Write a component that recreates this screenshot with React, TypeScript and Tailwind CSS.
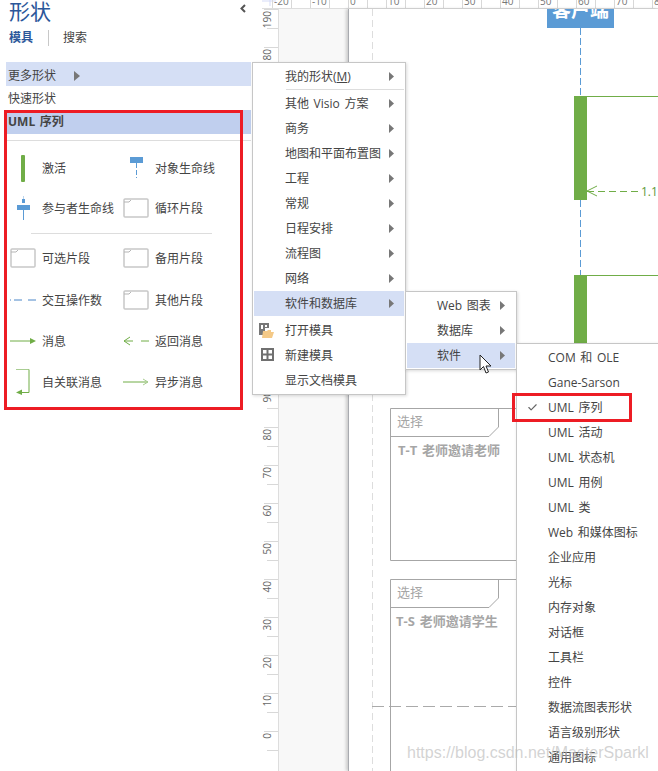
import React from "react";
import { Check } from "lucide-react";

const GREEN = "#70ad47";
const BLUE = "#5b9bd5";

function Caret({ className = "" }: { className?: string }) {
  return (
    <svg width="5" height="9" viewBox="0 0 5 9" className={className}>
      <polygon points="0,0 5,4.5 0,9" fill="#777" />
    </svg>
  );
}

function Fragment() {
  return (
    <svg width="26" height="20" viewBox="0 0 26 20">
      <rect x="1" y="1" width="24" height="18" rx="1" fill="#fff" stroke="#c8c8c8" strokeWidth="1.5" />
      <path d="M1 4 H6 L8 2" fill="none" stroke="#b5b5b5" />
    </svg>
  );
}

function Stencil({ label, icon }: { label: string; icon: React.ReactNode }) {
  return (
    <div className="flex w-[113px] items-center">
      <div className="flex w-[26px] shrink-0 items-center justify-center">{icon}</div>
      <span className="ml-[6px] whitespace-nowrap pt-[2px]">{label}</span>
    </div>
  );
}

function StencilRow({ h, children }: { h: string; children: React.ReactNode }) {
  return <div className={`flex items-center pl-[10px] ${h}`}>{children}</div>;
}

function Sidebar() {
  return (
    <aside className="h-full w-[262px] shrink-0 bg-white text-xs text-[#444]">
      <div className="flex h-[22px] items-center justify-between pl-[9px] pr-[16px]">
        <span className="text-[21px] leading-none text-[#2b579a]">形状</span>
        <svg width="6" height="9" viewBox="0 0 6 9" className="-mt-[6px]">
          <path d="M5 1 L1.5 4.5 L5 8" fill="none" stroke="#555" strokeWidth="2" />
        </svg>
      </div>
      <div className="mt-[8px] flex h-[16px] items-center pl-[9px]">
        <span className="font-bold text-[#2b579a]">模具</span>
        <span className="ml-[15px] mr-[14px] h-[16px] w-px bg-[#c8c8c8]" />
        <span>搜索</span>
      </div>
      <div className="mt-[16px] ml-[6px] w-[245px]">
        <div className="flex h-[24px] items-center bg-[#d5dff5] pl-[2px] pt-[3px]">
          更多形状
          <svg width="6" height="10" viewBox="0 0 6 10" className="ml-[18px]">
            <polygon points="0,0 6,5 0,10" fill="#777" />
          </svg>
        </div>
        <div className="flex h-[24px] items-center pl-[2px] pt-[2px]">快速形状</div>
        <div className="flex h-[24px] items-center bg-[#c0cfee] pl-[2px] font-bold">UML 序列</div>
        <div className="mt-[6px] h-px bg-[#dddddd]" />
      </div>
      <div className="mt-[7px]">
        <StencilRow h="h-[40px]">
          <Stencil label="激活" icon={<div className="h-[27px] w-[4px] rounded-[1px] bg-[#70ad47]" />} />
          <Stencil
            label="对象生命线"
            icon={
              <svg width="14" height="22" viewBox="0 0 14 22" className="ml-[2px]">
                <rect x="0" y="0" width="13" height="6" fill={BLUE} />
                <path d="M6.5 6 V21" stroke={BLUE} strokeDasharray="5 2" />
              </svg>
            }
          />
        </StencilRow>
        <StencilRow h="h-[40px]">
          <Stencil
            label="参与者生命线"
            icon={
              <svg width="14" height="24" viewBox="0 0 14 24" className="ml-[2px]">
                <path d="M6.5 0 V3" stroke="#bcd4ec" />
                <rect x="5" y="3" width="3" height="4" fill={BLUE} />
                <rect x="0" y="9" width="13" height="5" fill={BLUE} />
                <path d="M6.5 14 V24" stroke={BLUE} />
              </svg>
            }
          />
          <Stencil label="循环片段" icon={<Fragment />} />
        </StencilRow>
        <div className="ml-[31px] flex h-[10px] w-[181px] items-center">
          <div className="h-px w-full bg-[#dddddd]" />
        </div>
        <StencilRow h="h-[40px]">
          <Stencil label="可选片段" icon={<Fragment />} />
          <Stencil label="备用片段" icon={<Fragment />} />
        </StencilRow>
        <StencilRow h="h-[44px]">
          <Stencil
            label="交互操作数"
            icon={
              <svg width="26" height="4" viewBox="0 0 26 4">
                <path d="M0 2 H1 M4 2 H12 M18 2 H26" stroke="#4a86c8" />
              </svg>
            }
          />
          <Stencil label="其他片段" icon={<Fragment />} />
        </StencilRow>
        <StencilRow h="h-[38px]">
          <Stencil
            label="消息"
            icon={
              <svg width="26" height="8" viewBox="0 0 26 8">
                <path d="M0 4 H21" stroke={GREEN} />
                <polygon points="20,1 26,4 20,7" fill={GREEN} />
              </svg>
            }
          />
          <Stencil
            label="返回消息"
            icon={
              <svg width="26" height="10" viewBox="0 0 26 10">
                <path d="M7 1 L1 5 L7 9" fill="none" stroke={GREEN} />
                <path d="M1 5 H10 M18 5 H26" stroke={GREEN} />
              </svg>
            }
          />
        </StencilRow>
        <StencilRow h="h-[44px]">
          <Stencil
            label="自关联消息"
            icon={
              <svg width="26" height="26" viewBox="0 0 26 26">
                <path d="M6 0.5 H19" stroke="#a9cd92" />
                <path d="M19 0.5 V23.5 H10" fill="none" stroke={GREEN} />
                <polygon points="12,20.5 6,23.5 12,26" fill={GREEN} />
              </svg>
            }
          />
          <Stencil
            label="异步消息"
            icon={
              <svg width="26" height="8" viewBox="0 0 26 8">
                <path d="M0 4 H25" stroke={GREEN} />
                <path d="M20 1 L25 4 L20 7" fill="none" stroke="#a9cd92" />
              </svg>
            }
          />
        </StencilRow>
      </div>
    </aside>
  );
}

function TopRuler() {
  const ticks = Array.from({ length: 21 }, (_, i) => 272 + i * 19);
  const labels = ["-20", "-10", "0", "10", "20", "30", "40", "50", "60", "70", "80"];
  return (
    <div className="h-[9px] shrink-0 border-b border-[#dddddd] bg-white">
      <svg width="396" height="8" viewBox="262 0 396 8" className="block">
        <path d="M262 1 H276 M270 0 V6" stroke="#d5dbf7" />
        {ticks.map((x) => (
          <path key={x} d={`M${x + 0.5} 0 V8`} stroke="#d8d8d8" />
        ))}
        {labels.map((l, i) => (
          <text key={l} x={274 + i * 38} y="5" fontSize="10" fill="#777">
            {l}
          </text>
        ))}
      </svg>
    </div>
  );
}

function LeftRuler() {
  const marks = [190, 180, 170, 160, 150, 140, 130, 120, 110, 100, 90, 80, 70, 60, 50, 40, 30, 20, 10, 0];
  return (
    <div className="h-full w-[17px] shrink-0 border-r border-[#dddddd] bg-white">
      <svg width="16" height="762" viewBox="262 9 16 762" className="block">
        {marks.map((m, i) => {
          const y = 9 + i * 38;
          return (
            <g key={m}>
              <path d={`M264 ${y + 0.5} H278`} stroke="#d8d8d8" />
              <path d={`M267 ${y + 19.5} H278`} stroke="#d8d8d8" />
              <text
                x="0"
                y="0"
                fontSize="10"
                fill="#666"
                textAnchor="end"
                transform={`translate(271 ${y + 2}) rotate(-90)`}
              >
                {m}
              </text>
            </g>
          );
        })}
      </svg>
    </div>
  );
}

// the drawing on the page, in window coordinates
function Diagram() {
  const frag = "#a6a6a6";
  return (
    <svg width="310" height="762" viewBox="348 9 310 762" className="absolute -left-px top-0">
      <path d="M372.5 9 V771" stroke="#dddddd" strokeDasharray="7 4" />
      <path d="M372 706.5 H658" stroke="#aaaaaa" strokeDasharray="12 5" />

      <rect x="547" y="0" width="67" height="28" fill={BLUE} />
      <text x="580.5" y="17" fontSize="19" fontWeight="700" fill="#fff" textAnchor="middle">
        客户端
      </text>
      <path d="M580.5 28 V96 M580.5 200 V275" stroke={BLUE} strokeDasharray="7 3" />

      <rect x="574" y="96" width="13" height="104" fill={GREEN} />
      <rect x="574" y="275" width="13" height="80" fill={GREEN} />
      <path d="M587 96.5 H658 M587 275.5 H658" stroke={GREEN} />
      <path d="M597 186 L587 191 L597 196" fill="none" stroke={GREEN} />
      <path d="M587 191.5 H640" stroke={GREEN} strokeDasharray="7 4" />
      <text x="641" y="196" fontSize="12" fill="#5f9a3a">
        1.1
      </text>

      <path
        d="M390.5 560.5 V408.5 H658 M390.5 436.5 H489 L498.5 427 V408.5 M390.5 560.5 H658"
        fill="none"
        stroke={frag}
      />
      <path d="M390.5 771 V579.5 H658 M390.5 607.5 H489 L498.5 598 V579.5" fill="none" stroke={frag} />
      <text x="397" y="426" fontSize="13" fill="#a6a6a6">
        选择
      </text>
      <text x="398" y="455" fontSize="13" fontWeight="700" fill="#a6a6a6">
        T-T 老师邀请老师
      </text>
      <text x="397" y="597" fontSize="13" fill="#a6a6a6">
        选择
      </text>
      <text x="396" y="626" fontSize="13" fontWeight="700" fill="#a6a6a6">
        T-S 老师邀请学生
      </text>
    </svg>
  );
}

function MenuItem({
  label,
  active,
  arrow,
  icon,
  indent,
}: {
  label: React.ReactNode;
  active?: boolean;
  arrow?: boolean;
  icon?: React.ReactNode;
  indent: string;
}) {
  return (
    <div className={`relative flex h-[25px] items-center whitespace-nowrap ${indent} ${active ? "bg-[#d5dff5]" : ""}`}>
      {icon}
      {label}
      {arrow && <Caret className="absolute right-[10px] top-[8px]" />}
    </div>
  );
}

const frame = "absolute border border-[#c6c6c6] bg-white py-px shadow-[1px_1px_3px_rgba(0,0,0,0.15)]";

function MainMenu() {
  const rest = ["其他 Visio 方案", "商务", "地图和平面布置图", "工程", "常规", "日程安排", "流程图", "网络"];
  return (
    <div className={`${frame} left-[252px] top-[62px] w-[154px] px-px`}>
      <MenuItem
        indent="pl-[31px]"
        arrow
        label={
          <span>
            我的形状(<span className="underline">M</span>)
          </span>
        }
      />
      <div className="ml-[32px] mb-px h-px bg-[#dddddd]" />
      {rest.map((l) => (
        <MenuItem key={l} indent="pl-[31px]" arrow label={l} />
      ))}
      <MenuItem indent="pl-[31px]" arrow active label="软件和数据库" />
      <div className="h-[2px]" />
      <MenuItem
        indent="pl-[31px]"
        label="打开模具"
        icon={
          <svg width="18" height="18" viewBox="0 0 18 18" className="absolute left-[4px] top-[4px]">
            <path d="M1 1 H11 V6 H7 V9 H5 V13 H1 Z M3 3 V7 H5 V3 Z M7 3 V5 H9 V3 Z" fill="#777" fillRule="evenodd" />
            <path d="M4 16 L5 9 H9 L10 8 H13 V10 H16 L14 16 Z" fill="#f4c987" />
          </svg>
        }
      />
      <MenuItem
        indent="pl-[31px]"
        label="新建模具"
        icon={
          <svg width="13" height="13" viewBox="0 0 13 13" className="absolute left-[7px] top-[5px]">
            <path d="M0 0 H13 V13 H0 Z M2 2 V5.5 H5.5 V2 Z M7.5 2 V5.5 H11 V2 Z M2 7.5 V11 H5.5 V7.5 Z M7.5 7.5 V11 H11 V7.5 Z" fill="#707070" fillRule="evenodd" />
          </svg>
        }
      />
      <MenuItem indent="pl-[31px]" label="显示文档模具" />
    </div>
  );
}

function SecondMenu() {
  return (
    <div className={`${frame} left-[405px] top-[291px] w-[112px] px-px`}>
      <MenuItem indent="pl-[30px]" arrow label="Web 图表" />
      <MenuItem indent="pl-[30px]" arrow label="数据库" />
      <MenuItem indent="pl-[30px]" arrow active label="软件" />
    </div>
  );
}

function ThirdMenu() {
  const items = [
    "COM 和 OLE",
    "Gane-Sarson",
    "UML 序列",
    "UML 活动",
    "UML 状态机",
    "UML 用例",
    "UML 类",
    "Web 和媒体图标",
    "企业应用",
    "光标",
    "内存对象",
    "对话框",
    "工具栏",
    "控件",
    "数据流图表形状",
    "语言级别形状",
    "通用图标",
  ];
  return (
    <div className={`${frame} left-[516px] top-[343px] h-[440px] w-[160px] shadow-[-2px_0_4px_rgba(0,0,0,0.15)]`}>
      {items.map((l) => (
        <MenuItem
          key={l}
          indent="pl-[31px]"
          label={l}
          icon={
            l === "UML 序列" ? (
              <Check size={11} strokeWidth={2.5} className="absolute left-[10px] top-[7px] text-[#666]" />
            ) : undefined
          }
        />
      ))}
    </div>
  );
}

export default function App() {
  return (
    <div className="relative flex h-[771px] w-[658px] overflow-hidden bg-white font-['Open_Sans','Noto_Sans_CJK_SC',sans-serif] text-xs text-[#444] [word-spacing:1.5px]">
      <Sidebar />
      <main className="flex min-w-0 flex-1 flex-col">
        <TopRuler />
        <div className="flex min-h-0 flex-1">
          <LeftRuler />
          <div className="h-full w-[69px] shrink-0 bg-[#f8f8f8]" />
          <div className="relative h-full flex-1 border-l border-[#a9abb0] bg-white shadow-[-2px_0_3px_rgba(0,0,0,0.18)]">
            <Diagram />
          </div>
        </div>
      </main>

      <MainMenu />
      <SecondMenu />
      <ThirdMenu />

      {/* pointer */}
      <svg width="14" height="21" viewBox="0 0 14 21" className="absolute left-[479px] top-[354px]">
        <path d="M1 1 V16 L4.5 12.5 L7 19 L9.5 18 L7 12 H12 Z" fill="#fff" stroke="#222" />
      </svg>

      {/* red marks */}
      <div className="absolute left-[4px] top-[110px] h-[300px] w-[239px] border-[3px] border-[#ed1c24]" />
      <div className="absolute left-[512px] top-[393px] h-[29px] w-[120px] border-[3px] border-[#ed1c24]" />

      <span className="absolute left-[407px] top-[743px] font-['Liberation_Sans',sans-serif] text-[16px] leading-[20px] whitespace-nowrap text-[#c0c0c0]/70">
        https://blog.csdn.net/MasterSparkl
      </span>
    </div>
  );
}
